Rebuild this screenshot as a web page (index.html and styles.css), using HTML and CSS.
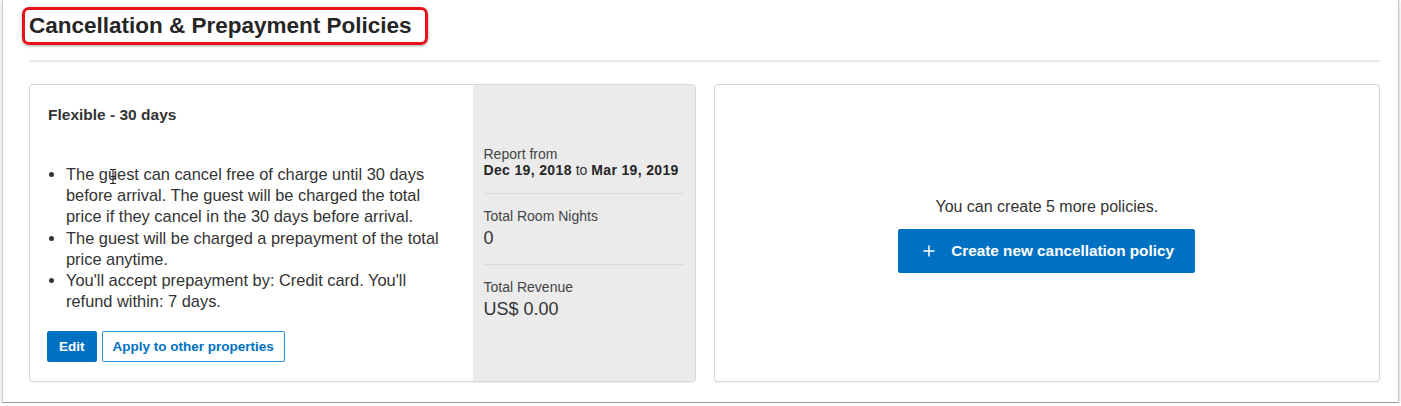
FILE: index.html
```html
<!DOCTYPE html>
<html lang="en">
<head>
<meta charset="utf-8">
<title>Cancellation &amp; Prepayment Policies</title>
<link rel="stylesheet" href="styles.css">
</head>
<body>
<div class="window">
  <header class="head">
    <h1 class="title">Cancellation &amp; Prepayment Policies</h1>
  </header>
  <div class="rule"></div>
  <div class="cards">
    <section class="card policy">
      <div class="policy-main">
        <h2 class="policy-name">Flexible - 30 days</h2>
        <ul class="terms">
          <li class="first">The guest can cancel free of charge until 30 days before arrival. The guest will be charged the total price if they cancel in the 30 days before arrival.<svg class="ibeam" width="8" height="17" viewBox="0 0 8 17"><path d="M1 1.5h2.2c.5 0 .8.3.8.8v12.4c0 .5.3.8.8.8H7M7 1.5H4.8c-.5 0-.8.3-.8.8M1 15.5h2.2c.5 0 .8-.3.8-.8M2 8.5h4" fill="none" stroke="#222" stroke-width="1.1"/></svg></li>
          <li>The guest will be charged a prepayment of the total price anytime.</li>
          <li>You'll accept prepayment by: Credit card. You'll refund within: 7 days.</li>
        </ul>
        <div class="actions">
          <button class="btn btn-primary">Edit</button>
          <button class="btn btn-outline">Apply to other properties</button>
        </div>
      </div>
      <aside class="report">
        <div class="stat">
          <div class="label">Report from</div>
          <div class="range"><b>Dec 19, 2018</b> to <b>Mar 19, 2019</b></div>
        </div>
        <div class="stat">
          <div class="label">Total Room Nights</div>
          <div class="value">0</div>
        </div>
        <div class="stat">
          <div class="label">Total Revenue</div>
          <div class="value">US$ 0.00</div>
        </div>
      </aside>
    </section>
    <section class="card create">
      <p class="create-note">You can create 5 more policies.</p>
      <button class="btn btn-primary btn-large"><svg class="plus" width="12" height="12" viewBox="0 0 12 12"><path d="M6 0.5v11M0.5 6h11" stroke="#fff" stroke-width="1.5" fill="none"/></svg>Create new cancellation policy</button>
    </section>
  </div>
</div>
</body>
</html>
```

FILE: styles.css
```css
* { box-sizing: border-box; }

html, body {
  margin: 0;
  padding: 0;
  background: #ffffff;
}

body {
  font-family: "Liberation Sans", Arial, sans-serif;
  color: #333333;
}

.window {
  margin-left: 2px;
  width: 1397px;
  height: 403px;
  background: #ffffff;
  border-left: 1px solid #d2d2d2;
  border-right: 1px solid #c8c8c8;
  border-bottom: 1px solid #9a9a9a;
  box-shadow: 0 1px 3px rgba(0, 0, 0, 0.25);
  padding: 7px 18px 0 26px;
}

.head {
  display: flex;
}

.title {
  margin: 0 0 0 -7px;
  display: inline-block;
  font-size: 22.5px;
  line-height: 26px;
  font-weight: bold;
  color: #262626;
  border: 3px solid #e8131a;
  border-radius: 7px;
  padding: 3px 14px 3px 4px;
  width: 406px;
  white-space: nowrap;
  box-shadow: 0 1px 3px rgba(0, 0, 0, 0.35);
}

.rule {
  margin-top: 15px;
  height: 2px;
  background: #e9e9e9;
}

.cards {
  margin-top: 22px;
  display: grid;
  grid-template-columns: 1fr 1fr;
  gap: 18px;
}

.card {
  border: 1px solid #d6d6d6;
  border-radius: 4px;
  background: #ffffff;
  overflow: hidden;
  box-shadow: 0 1px 1px rgba(0, 0, 0, 0.06);
}

.policy {
  display: grid;
  grid-template-columns: 1fr 222px;
}

.policy-main {
  padding: 20px 22px 19px 17px;
}

.policy-name {
  margin: 0 0 0 1px;
  font-size: 15.5px;
  line-height: 20px;
  font-weight: bold;
  color: #333333;
}

.terms {
  margin: 39px 0 0 0;
  padding-left: 19px;
  font-size: 16.4px;
  line-height: 21.2px;
  color: #333333;
}

.terms li {
  position: relative;
}

.ibeam {
  position: absolute;
  left: 43px;
  top: 4px;
}

.actions {
  margin-top: 19px;
  display: flex;
  gap: 5px;
}

.btn {
  font-family: "Liberation Sans", Arial, sans-serif;
  font-weight: bold;
  font-size: 13.5px;
  height: 31px;
  border-radius: 2px;
  cursor: pointer;
  display: inline-flex;
  align-items: center;
  justify-content: center;
}

.btn-primary {
  background: #0071c2;
  border: 1px solid #0071c2;
  color: #ffffff;
  padding: 0 11px;
}

.btn-outline {
  background: #ffffff;
  border: 1px solid #2a8fd6;
  color: #0071c2;
  padding: 0 10px;
}

.report {
  background: #ebebeb;
  padding: 0 11px;
  display: flex;
  flex-direction: column;
  justify-content: center;
}

.stat {
  padding: 14px 0 15px;
  border-bottom: 1px solid #dadada;
}

.stat:first-child {
  padding-top: 0;
}

.stat:last-child {
  border-bottom: none;
  padding-bottom: 0;
}

.label {
  font-size: 14px;
  line-height: 16px;
  color: #444444;
}

.range {
  font-size: 14px;
  line-height: 16px;
  color: #333333;
  white-space: nowrap;
}

.range b {
  letter-spacing: 0.35px;
  color: #262626;
}

.value {
  font-size: 18px;
  line-height: 22px;
  margin-top: 3px;
  color: #333333;
}

.create {
  display: flex;
  flex-direction: column;
  align-items: center;
  justify-content: center;
  padding-top: 4px;
}

.create-note {
  margin: 0 0 12px;
  font-size: 16px;
  line-height: 20px;
  color: #333333;
}

.btn-large {
  width: 297px;
  height: 44px;
  font-size: 15.3px;
  padding: 0 20px 0 24px;
  justify-content: flex-start;
  border-radius: 2px;
}

.plus {
  margin-right: 16px;
  flex: none;
}
```
